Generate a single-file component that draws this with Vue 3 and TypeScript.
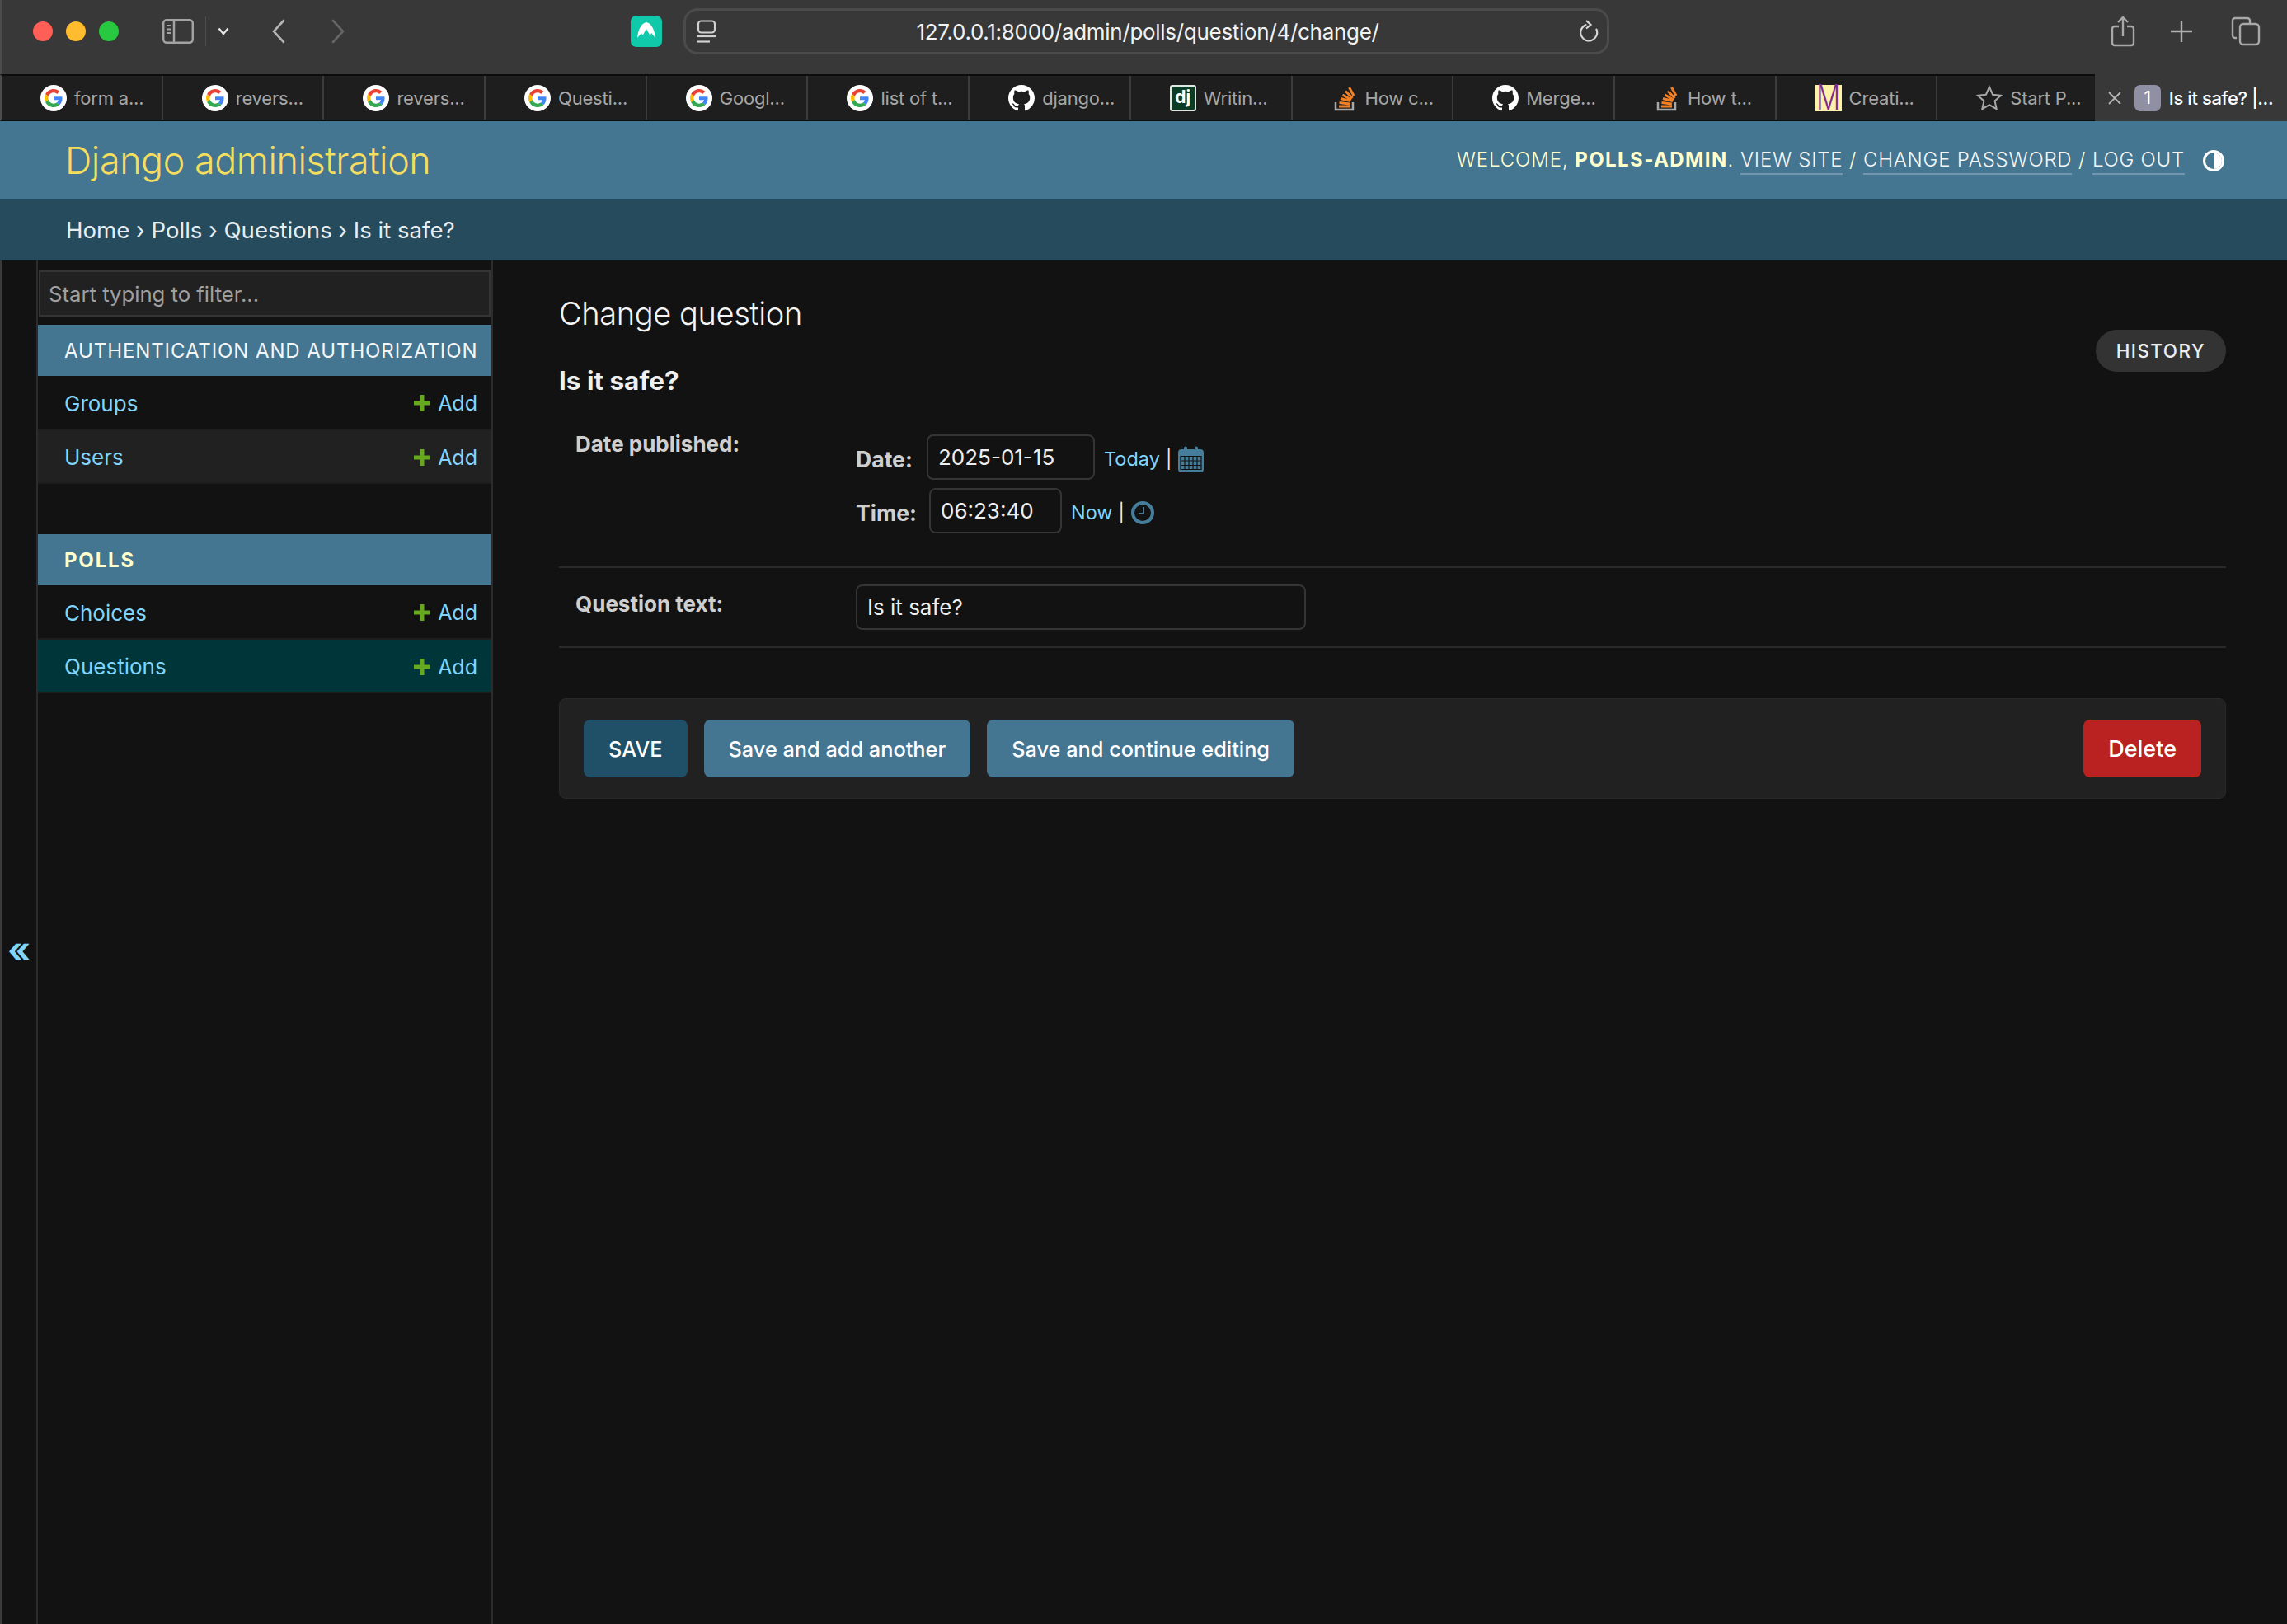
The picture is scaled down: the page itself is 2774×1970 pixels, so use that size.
<script setup lang="ts">
type TabKind = 'google' | 'github' | 'django' | 'so' | 'mdn' | 'star'

interface TabItem { kind: TabKind; label: string }
interface ModelRow { name: string; selected?: boolean }
interface AppModule { title: string; current?: boolean; models: ModelRow[] }

const tabs: TabItem[] = [
  { kind: 'google', label: 'form a...' },
  { kind: 'google', label: 'revers...' },
  { kind: 'google', label: 'revers...' },
  { kind: 'google', label: 'Questi...' },
  { kind: 'google', label: 'Googl...' },
  { kind: 'google', label: 'list of t...' },
  { kind: 'github', label: 'django...' },
  { kind: 'django', label: 'Writin...' },
  { kind: 'so', label: 'How c...' },
  { kind: 'github', label: 'Merge...' },
  { kind: 'so', label: 'How t...' },
  { kind: 'mdn', label: 'Creati...' },
  { kind: 'star', label: 'Start P...' },
]

const modules: AppModule[] = [
  {
    title: 'Authentication and Authorization',
    models: [{ name: 'Groups' }, { name: 'Users' }],
  },
  {
    title: 'Polls',
    current: true,
    models: [{ name: 'Choices' }, { name: 'Questions', selected: true }],
  },
]
</script>

<template>
  <div class="window">
    <div class="toolbar">
      <span class="light red"></span>
      <span class="light yellow"></span>
      <span class="light green"></span>
      <svg class="ic-sidebar" width="38" height="30" viewBox="0 0 38 30" fill="none" stroke="#a3a3a3" stroke-width="2.5">
        <rect x="1.2" y="1.2" width="35.6" height="27.6" rx="4" />
        <path d="M14 1v28" />
        <path d="M5 8h5M5 12.500h5M5 17h5" stroke-width="1.800" />
      </svg>
      <span class="tool-sep"></span>
      <svg class="ic-chevron" width="14" height="10" viewBox="0 0 14 10" fill="none" stroke="#e6e6e6" stroke-width="2.400">
        <path d="M1.500 1.500 7 8l5.500-6.500" />
      </svg>
      <svg class="ic-back" width="16" height="30" viewBox="0 0 16 30" fill="none" stroke="#b4b4b4" stroke-width="2.600" stroke-linecap="round">
        <path d="M14 2 2 15l12 13" />
      </svg>
      <svg class="ic-forward" width="16" height="30" viewBox="0 0 16 30" fill="none" stroke="#666" stroke-width="2.600" stroke-linecap="round">
        <path d="m2 2 12 13L2 28" />
      </svg>
      <svg class="ic-vpn" width="38" height="38" viewBox="0 0 38 38">
        <rect width="38" height="38" rx="7" fill="#10c9ab" />
        <path d="M8 27C9 17 13 9 19 8c6 1 10 9 11 19l-5-6-1.500 3L19 16l-4.500 8-1.500-3z" fill="#fff" />
      </svg>
      <div class="urlbar">
        <svg class="ic-page" width="24" height="28" viewBox="0 0 24 28" fill="none" stroke="#d0d0d0" stroke-width="2.200">
          <rect x="2" y="1.500" width="20" height="14" rx="3.500" />
          <path d="M0 20h24" />
          <path d="M0 26.500h16" />
        </svg>
        <span class="url">127.0.0.1:8000/admin/polls/question/4/change/</span>
        <svg class="ic-reload" width="24" height="28" viewBox="0 0 24 28" fill="none" stroke="#d6d6d6" stroke-width="2.200">
          <path d="M12 5.500a10 10 0 1 0 10 10" stroke-linecap="round" transform="rotate(-22 12 15)" />
          <path d="m9 1 5.500 5L9 10.500" />
        </svg>
      </div>
      <svg class="ic-share" width="30" height="38" viewBox="0 0 30 38" fill="none" stroke="#a8a8a8" stroke-width="2.400">
        <path d="M10 13H5a3 3 0 0 0-3 3v17a3 3 0 0 0 3 3h20a3 3 0 0 0 3-3V16a3 3 0 0 0-3-3h-5" />
        <path d="M15 25V2M9 8l6-6 6 6" />
      </svg>
      <svg class="ic-plus" width="28" height="28" viewBox="0 0 28 28" fill="none" stroke="#b0b0b0" stroke-width="2.400">
        <path d="M14 1v26M1 14h26" />
      </svg>
      <svg class="ic-tabs" width="36" height="36" viewBox="0 0 36 36" fill="none" stroke="#a8a8a8" stroke-width="2.400">
        <path d="M7 26H5a3 3 0 0 1-3-3V5a3 3 0 0 1 3-3h15a3 3 0 0 1 3 3v3" />
        <rect x="11" y="9" width="23" height="25" rx="4" />
      </svg>
    </div>

    <div class="tabbar">
      <div v-for="(tab, i) in tabs" :key="i" class="tab">
        <span v-if="tab.kind === 'google'" class="fav fav-google">
          <svg width="22" height="22" viewBox="0 0 48 48">
            <path fill="#EA4335" d="M24 9.500c3.540 0 6.710 1.220 9.210 3.600l6.850-6.850C35.900 2.380 30.470 0 24 0 14.620 0 6.510 5.380 2.560 13.220l7.980 6.190C12.430 13.720 17.740 9.500 24 9.500z" />
            <path fill="#4285F4" d="M46.980 24.550c0-1.570-.15-3.090-.38-4.550H24v9.020h12.940c-.58 2.960-2.260 5.480-4.780 7.180l7.730 6c4.510-4.180 7.090-10.360 7.090-17.650z" />
            <path fill="#FBBC05" d="M10.530 28.590c-.48-1.450-.76-2.990-.76-4.590s.27-3.140.76-4.590l-7.980-6.190C.92 16.460 0 20.120 0 24c0 3.880.92 7.540 2.560 10.780l7.970-6.190z" />
            <path fill="#34A853" d="M24 48c6.480 0 11.930-2.130 15.890-5.810l-7.730-6c-2.150 1.450-4.920 2.300-8.160 2.300-6.260 0-11.570-4.220-13.470-9.910l-7.980 6.190C6.510 42.620 14.620 48 24 48z" />
          </svg>
        </span>
        <svg v-else-if="tab.kind === 'github'" class="fav" width="32" height="32" viewBox="0 0 16 16" fill="#fff">
          <path d="M8 0C3.580 0 0 3.580 0 8c0 3.540 2.290 6.530 5.470 7.590.4.070.55-.17.55-.38 0-.19-.01-.82-.01-1.490-2.010.37-2.530-.49-2.690-.94-.09-.23-.48-.94-.82-1.130-.28-.15-.68-.52-.01-.53.63-.01 1.080.58 1.230.82.72 1.210 1.870.87 2.330.66.070-.52.28-.87.51-1.070-1.780-.2-3.640-.89-3.640-3.950 0-.87.31-1.590.82-2.150-.08-.2-.36-1.020.08-2.120 0 0 .67-.21 2.200.82.64-.18 1.320-.27 2-.27.68 0 1.360.09 2 .27 1.530-1.040 2.200-.82 2.200-.82.44 1.100.16 1.920.08 2.120.51.56.82 1.270.82 2.150 0 3.070-1.870 3.750-3.650 3.950.29.25.54.73.54 1.480 0 1.070-.01 1.930-.01 2.200 0 .21.15.46.55.38A8.013 8.013 0 0 0 16 8c0-4.420-3.580-8-8-8z" />
        </svg>
        <span v-else-if="tab.kind === 'django'" class="fav fav-django">dj</span>
        <svg v-else-if="tab.kind === 'so'" class="fav" width="32" height="32" viewBox="0 0 32 32" fill="none">
          <path d="M5 21v9h21v-9" stroke="#a8a8a8" stroke-width="2.500" />
          <path d="M9 26h13M9.500 21.500l12.500 1.500M11 16.500l12 3M13.500 12l10.500 6M17 7.500l8.500 8.500M21.500 3l5.500 10" stroke="#f48024" stroke-width="3" />
        </svg>
        <span v-else-if="tab.kind === 'mdn'" class="fav fav-mdn"><span class="mdn-letter">M</span></span>
        <svg v-else class="fav" width="32" height="32" viewBox="0 0 32 32" fill="none" stroke="#a8a8a8" stroke-width="2">
          <path d="m16 2.500 4.100 9.200 10 1-7.500 6.700 2.100 9.800L16 24.200l-8.700 5 2.100-9.800-7.500-6.700 10-1z" />
        </svg>
        <span class="tab-label">{{ tab.label }}</span>
      </div>
      <div class="tab-active">
        <svg class="ic-close" width="16" height="16" viewBox="0 0 16 16" stroke="#b5b5b5" stroke-width="1.800">
          <path d="m1 1 14 14M15 1 1 15" />
        </svg>
        <span class="tab-badge">1</span>
        <span class="tab-label-active">Is it safe? |...</span>
      </div>
    </div>

    <header class="site-header">
      <div class="branding">Django administration</div>
      <div class="user-tools">
        Welcome, <strong>polls-admin</strong>.
        <a class="tool-link">View site</a> /
        <a class="tool-link">Change password</a> /
        <a class="tool-link">Log out</a>
      </div>
      <span class="theme-toggle"><span class="theme-half"></span></span>
    </header>

    <nav class="breadcrumbs">Home › Polls › Questions › Is it safe?</nav>

    <div class="main">
      <div class="nav-toggle">«</div>
      <aside class="sidebar">
        <div class="filter">Start typing to filter...</div>
        <section v-for="mod in modules" :key="mod.title" class="module">
          <div :class="['caption', { current: mod.current }]">{{ mod.title }}</div>
          <div
            v-for="row in mod.models"
            :key="row.name"
            :class="['model-row', { selected: row.selected }]"
          >
            <span class="model-name">{{ row.name }}</span>
            <span class="add">
              <svg width="20" height="20" viewBox="0 0 20 20" fill="#66a91f">
                <path d="M7.500 0h5v7.500H20v5h-7.500V20h-5v-7.500H0v-5h7.500z" />
              </svg>
              Add
            </span>
          </div>
        </section>
      </aside>

      <main class="content">
        <div class="page-head">
          <div>
            <h1 class="title">Change question</h1>
            <h2 class="subtitle">Is it safe?</h2>
          </div>
          <a class="history">History</a>
        </div>

        <div class="form-row date-row">
          <label class="field-label date-label">Date published:</label>
          <div class="date-fields">
            <div class="dt-line">
              <span class="dt-label">Date:</span>
              <span class="input input-date">2025-01-15</span>
              <a class="dt-link">Today</a>
              <span class="dt-sep">|</span>
              <svg class="ic-cal" width="31" height="32" viewBox="0 0 31 32">
                <path fill="#447e9b" d="M4 4h3V2.500a2 2 0 0 1 4 0V4h9V2.500a2 2 0 0 1 4 0V4h3a4 4 0 0 1 4 4v20a4 4 0 0 1-4 4H4a4 4 0 0 1-4-4V8a4 4 0 0 1 4-4z" />
                <path stroke="#121212" stroke-width="1.200" d="M3 12.500h25v16H3zM3 18h25M3 23.500h25M8 12.500v16M13 12.500v16M18 12.500v16M23 12.500v16" fill="none" />
              </svg>
            </div>
            <div class="dt-line">
              <span class="dt-label">Time:</span>
              <span class="input input-time">06:23:40</span>
              <a class="dt-link">Now</a>
              <span class="dt-sep">|</span>
              <svg class="ic-clock" width="28" height="28" viewBox="0 0 28 28" fill="none">
                <circle cx="14" cy="14" r="12" stroke="#447e9b" stroke-width="4" />
                <path d="M15 7v8H9" stroke="#447e9b" stroke-width="2" />
              </svg>
            </div>
          </div>
        </div>

        <div class="form-row text-row">
          <label class="field-label text-label">Question text:</label>
          <span class="input input-text">Is it safe?</span>
        </div>

        <div class="submit-row">
          <button class="btn default">SAVE</button>
          <button class="btn">Save and add another</button>
          <button class="btn">Save and continue editing</button>
          <button class="btn delete">Delete</button>
        </div>
      </main>
    </div>
  </div>
</template>

<style scoped>
.window {
  width: 2774px;
  height: 1970px;
  display: flex;
  flex-direction: column;
  overflow: hidden;
  background: #121212;
  color: #f5f5f5;
  font-family: Inter, "Liberation Sans", sans-serif;
  font-size: 26px;
}

/* browser chrome */
.toolbar {
  height: 90px;
  flex-shrink: 0;
  display: flex;
  align-items: center;
  padding-left: 40px;
  background: #383838;
  border-left: 2px solid #4c4c4c;
  box-sizing: border-box;
}
.light { width: 24px; height: 24px; border-radius: 50%; margin-right: 16px; margin-top: -14px; }
.light:first-child { margin-left: -2px; }
.red { background: #ff5f57; }
.yellow { background: #febc2e; }
.green { background: #28c840; }
.toolbar svg { flex-shrink: 0; margin-top: -14px; }
.ic-sidebar { margin-left: 37px; }
.tool-sep { width: 1px; height: 36px; background: #4d4d4d; margin: -14px 0 0 14px; }
.ic-chevron { margin-left: 14px; }
.ic-back { margin-left: 52px; }
.ic-forward { margin-left: 56px; }
.ic-vpn { margin-left: 347px; }
.urlbar {
  width: 1123px;
  height: 56px;
  margin: -14px 0 0 26px;
  box-sizing: border-box;
  border: 3px solid #4b4b4b;
  border-radius: 17px;
  display: flex;
  align-items: center;
  padding: 0 10px 0 13px;
}
.urlbar svg { margin-top: 0; }
.url {
  flex: 1;
  text-align: center;
  font-size: 26px;
  color: #f2f2f2;
  letter-spacing: -0.3px;
}
.ic-share { margin-left: 608px; }
.ic-plus { margin-left: 42px; }
.ic-tabs { margin-left: 46px; }

.tabbar {
  height: 57px;
  flex-shrink: 0;
  display: flex;
  background: #1e1e1e;
  border-top: 2px solid #0c0c0c;
  border-bottom: 2px solid #0c0c0c;
  border-left: 2px solid #4c4c4c;
  box-sizing: border-box;
}
.tab {
  width: 195.700px;
  flex-shrink: 0;
  box-sizing: border-box;
  display: flex;
  align-items: center;
  padding-left: 47px;
  gap: 9px;
  border-right: 2px solid #3c3c3c;
}
.tab:nth-child(13) { width: 190.600px; border-right: none; }
.tab-label { font-size: 22px; color: #a6a6a6; white-space: nowrap; letter-spacing: -0.2px; }
.fav { flex-shrink: 0; width: 32px; height: 32px; }
.fav-google {
  background: #fff;
  border-radius: 50%;
  display: flex;
  align-items: center;
  justify-content: center;
}
.fav-django {
  background: #0c3c26;
  border: 2px solid #dfe7e2;
  border-radius: 3px;
  box-sizing: border-box;
  color: #fff;
  font-weight: 700;
  font-size: 21px;
  line-height: 26px;
  text-align: center;
}
.fav-mdn {
  background: #fdf2a8;
  display: flex;
  align-items: center;
  justify-content: center;
}
.mdn-letter {
  color: #7a2d8f;
  font-size: 32px;
  font-weight: 300;
  line-height: 32px;
  transform: scaleY(1.3);
}
.tab-active {
  flex: 1;
  display: flex;
  align-items: center;
  margin: -2px 0;
  padding-left: 16px;
  background: #383838;
  overflow: hidden;
  white-space: nowrap;
}
.ic-close { flex-shrink: 0; }
.tab-badge {
  flex-shrink: 0;
  width: 32px;
  height: 32px;
  margin-left: 16px;
  background: #8f90a4;
  border-radius: 7px;
  color: #fff;
  font-size: 21px;
  line-height: 32px;
  text-align: center;
}
.tab-label-active { margin-left: 10px; font-size: 22px; font-weight: 500; color: #fff; letter-spacing: -0.4px; }

/* django header */
.site-header {
  height: 95px;
  flex-shrink: 0;
  display: flex;
  align-items: center;
  padding: 0 76px 0 79px;
  background: #447591;
  color: #ffc;
}
.branding { font-size: 44.800px; font-weight: 300; color: #f5dd5d; letter-spacing: -0.4px; }
.user-tools {
  margin-left: auto;
  margin-top: -3px;
  font-size: 24px;
  font-weight: 300;
  letter-spacing: 0.9px;
  text-transform: uppercase;
  white-space: nowrap;
}
.user-tools strong { font-weight: 700; letter-spacing: 1.400px; }
.tool-link {
  color: #f5f5f5;
  letter-spacing: 0.750px;
  padding-bottom: 2px;
  border-bottom: 2px solid #7196ae;
}
.theme-toggle {
  width: 26px;
  height: 26px;
  margin-left: 22px;
  box-sizing: border-box;
  border: 3px solid #fff;
  border-radius: 50%;
  display: flex;
  justify-content: flex-end;
  overflow: hidden;
}
.theme-half { width: 50%; background: #fff; }

.breadcrumbs {
  height: 74px;
  flex-shrink: 0;
  display: flex;
  align-items: center;
  padding-left: 80px;
  background: #264b5d;
  color: #e6eef2;
  font-size: 27.600px;
}

/* admin body */
.main { flex: 1; display: flex; min-height: 0; }
.nav-toggle {
  width: 46px;
  flex-shrink: 0;
  box-sizing: border-box;
  border-left: 2px solid #3a3a3a;
  border-right: 2px solid #2c2c2c;
  display: flex;
  align-items: center;
  justify-content: center;
  padding-top: 16px;
  color: #81d4fa;
  font-size: 42px;
  font-weight: 700;
}
.sidebar {
  width: 552px;
  flex-shrink: 0;
  box-sizing: border-box;
  padding-top: 12px;
  border-right: 2px solid #2c2c2c;
}
.filter {
  height: 56px;
  margin: 0 1px 10px;
  box-sizing: border-box;
  display: flex;
  align-items: center;
  padding-left: 10px;
  background: #212121;
  border: 2px solid #353535;
  color: #a0a0a0;
  font-size: 25.700px;
}
.module { margin-bottom: 61px; }
.caption {
  height: 62px;
  display: flex;
  align-items: center;
  padding-left: 32px;
  background: #447591;
  color: #f5f5f5;
  font-size: 24px;
  letter-spacing: 0.9px;
  text-transform: uppercase;
  white-space: nowrap;
}
.caption.current { color: #ffc; font-weight: 700; letter-spacing: 1.800px; }
.model-row {
  height: 65.500px;
  box-sizing: border-box;
  display: flex;
  align-items: center;
  justify-content: space-between;
  padding: 3px 17px 0 32px;
  border-bottom: 2px solid #1d1d1d;
  color: #81d4fa;
}
.model-row:nth-child(odd) { background: #212121; }
.model-row.selected { background: #00363a; }
.add { display: flex; align-items: center; gap: 9px; font-size: 25px; }

.content { flex: 1; box-sizing: border-box; padding: 40px 74px 0 80px; }
.page-head { display: flex; justify-content: space-between; align-items: flex-start; height: 151px; }
.title { margin: 0 0 38px; font-size: 38px; line-height: 48px; font-weight: 300; color: #f5f5f5; letter-spacing: -0.4px; }
.subtitle { margin: 0; font-size: 31.500px; line-height: 40px; font-weight: 700; color: #f0f0f0; }
.history {
  margin-top: 44px;
  height: 51px;
  padding: 0 25px;
  display: flex;
  align-items: center;
  border-radius: 26px;
  background: #333;
  color: #eee;
  font-size: 22.400px;
  font-weight: 500;
  letter-spacing: 1.500px;
  text-transform: uppercase;
}
.form-row {
  display: flex;
  align-items: flex-start;
  box-sizing: border-box;
  padding-left: 20px;
  border-bottom: 2px solid #2a2a2a;
}
.date-row { padding-top: 20px; padding-bottom: 40px; }
.text-row { padding-top: 20px; padding-bottom: 20px; }
.field-label {
  width: 340px;
  flex-shrink: 0;
  font-weight: 700;
  line-height: 36px;
  color: #cfcfcf;
}
.date-label { margin-top: -6px; }
.text-label { margin-top: 6px; }
.date-fields { display: flex; flex-direction: column; gap: 10px; }
.dt-line { display: flex; align-items: center; }
.dt-label { width: 86px; font-size: 26.600px; font-weight: 700; color: #cfcfcf; margin-top: 4px; }
.dt-line:nth-child(2) .dt-label { width: 89px; }
.input {
  height: 55px;
  box-sizing: border-box;
  display: flex;
  align-items: center;
  padding-left: 12px;
  border: 2.500px solid #353535;
  border-radius: 8px;
  color: #eee;
}
.input-date { width: 204px; }
.input-time { width: 161px; }
.input-text { width: 546px; }
.dt-link { margin: 4px 0 0 11px; color: #81d4fa; font-size: 23.500px; }
.dt-sep { margin: 4px 0 0 7px; color: #eee; font-size: 22px; }
.ic-cal { margin: 4px 0 0 8px; }
.ic-clock { margin: 4px 0 0 8px; }
.submit-row {
  margin-top: 61px;
  box-sizing: border-box;
  display: flex;
  gap: 20px;
  padding: 25px 29px;
  border: 1px solid #292929;
  border-radius: 8px;
  background: #212121;
}
.btn {
  height: 70px;
  padding: 0 30px;
  border: none;
  border-radius: 8px;
  background: #447591;
  color: #fff;
  font-family: Inter, "Liberation Sans", sans-serif;
  font-size: 25.300px;
  font-weight: 500;
  white-space: nowrap;
}
.btn.default { background: #205067; }
.btn.delete { margin-left: auto; background: #ba2121; font-size: 27px; }
</style>

<style>
html, body { margin: 0; background: #121212; }
</style>
